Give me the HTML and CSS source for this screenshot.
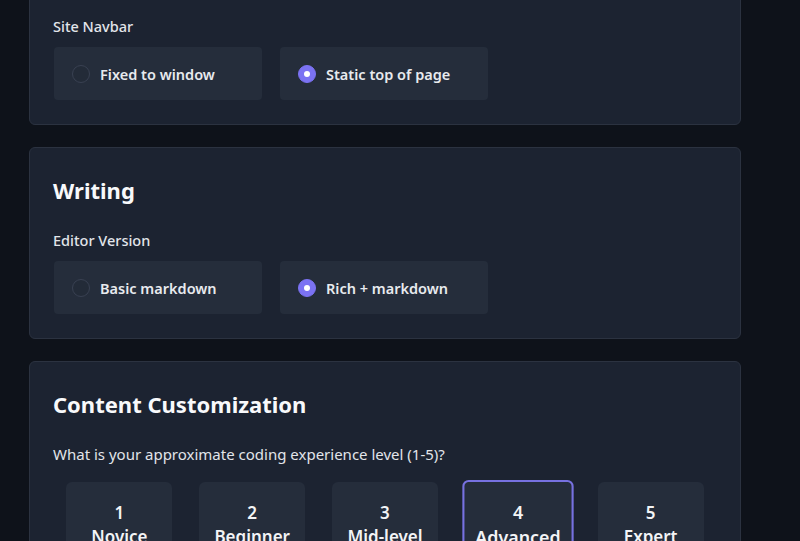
FILE: index.html
```html
<!DOCTYPE html>
<html lang="en">
<head>
<meta charset="utf-8">
<title>Settings</title>
<link rel="stylesheet" href="styles.css">
</head>
<body>
<main class="page">
  <section class="panel">
    <div class="field">
      <div class="field-label">Site Navbar</div>
      <div class="options">
        <label class="option"><span class="radio"></span><span class="option-text">Fixed to window</span></label>
        <label class="option"><span class="radio radio-on"></span><span class="option-text">Static top of page</span></label>
      </div>
    </div>
  </section>

  <section class="panel">
    <h2 class="panel-title">Writing</h2>
    <div class="field">
      <div class="field-label">Editor Version</div>
      <div class="options">
        <label class="option"><span class="radio"></span><span class="option-text">Basic markdown</span></label>
        <label class="option"><span class="radio radio-on"></span><span class="option-text">Rich + markdown</span></label>
      </div>
    </div>
  </section>

  <section class="panel">
    <h2 class="panel-title">Content Customization</h2>
    <div class="field">
      <div class="field-label question">What is your approximate coding experience level (1-5)?</div>
      <div class="levels">
        <div class="level"><span class="level-num">1</span><span class="level-name">Novice</span></div>
        <div class="level"><span class="level-num">2</span><span class="level-name">Beginner</span></div>
        <div class="level"><span class="level-num">3</span><span class="level-name">Mid-level</span></div>
        <div class="level level-on"><span class="level-num">4</span><span class="level-name">Advanced</span></div>
        <div class="level"><span class="level-num">5</span><span class="level-name">Expert</span></div>
      </div>
    </div>
  </section>
</main>
</body>
</html>
```

FILE: styles.css
```css
* { box-sizing: border-box; }

html, body {
  margin: 0;
  padding: 0;
  background: #0e121a;
  overflow: hidden;
}

body {
  font-family: "Noto Sans", "Open Sans", sans-serif;
  color: #e5e7eb;
}

/* settings column, scrolled a little past the top of the first card */
.page {
  width: 712px;
  margin: -11px 0 0 29px;
  display: flex;
  flex-direction: column;
  gap: 22px;
}

.panel {
  background: #1c2331;
  border: 1px solid #2b3240;
  border-radius: 6px;
  padding: 26px 23px 24px 23px;
}

.panel-title {
  margin: 0 0 24px;
  font-size: 22px;
  line-height: 32px;
  font-weight: 700;
  color: #f8f9fb;
}

.field-label {
  font-size: 14.5px;
  line-height: 20px;
  font-weight: 500;
  color: #e2e5ea;
  margin-bottom: 11px;
}

.question {
  font-size: 15px;
  font-weight: 400;
  margin-bottom: 18px;
}

.options {
  display: flex;
  gap: 18px;
  padding-left: 1px;
}

.option {
  width: 208px;
  height: 53px;
  display: flex;
  align-items: center;
  gap: 10px;
  padding-left: 18px;
  background: #252d3b;
  border-radius: 4px;
}

.radio {
  width: 18px;
  height: 18px;
  border-radius: 50%;
  border: 1.5px solid #394152;
  background: #232b38;
  display: flex;
  align-items: center;
  justify-content: center;
}

.radio-on {
  border-color: #7b72f3;
  background: #7b72f3;
}

.radio-on::after {
  content: "";
  width: 6px;
  height: 6px;
  border-radius: 50%;
  background: #ffffff;
}

.option-text {
  font-size: 14.5px;
  font-weight: 600;
  color: #e8eaee;
}

.levels {
  display: flex;
  justify-content: space-around;
}

.level {
  width: 106px;
  height: 84px;
  display: flex;
  flex-direction: column;
  align-items: center;
  padding-top: 17px;
  background: #252d3b;
  border: 2px solid transparent;
  border-radius: 6px;
  font-size: 17px;
  line-height: 24px;
  font-weight: 600;
  color: #f3f4f6;
}

.level-on {
  border-color: #7771e0;
  transform: scale(1.05);
}
```
